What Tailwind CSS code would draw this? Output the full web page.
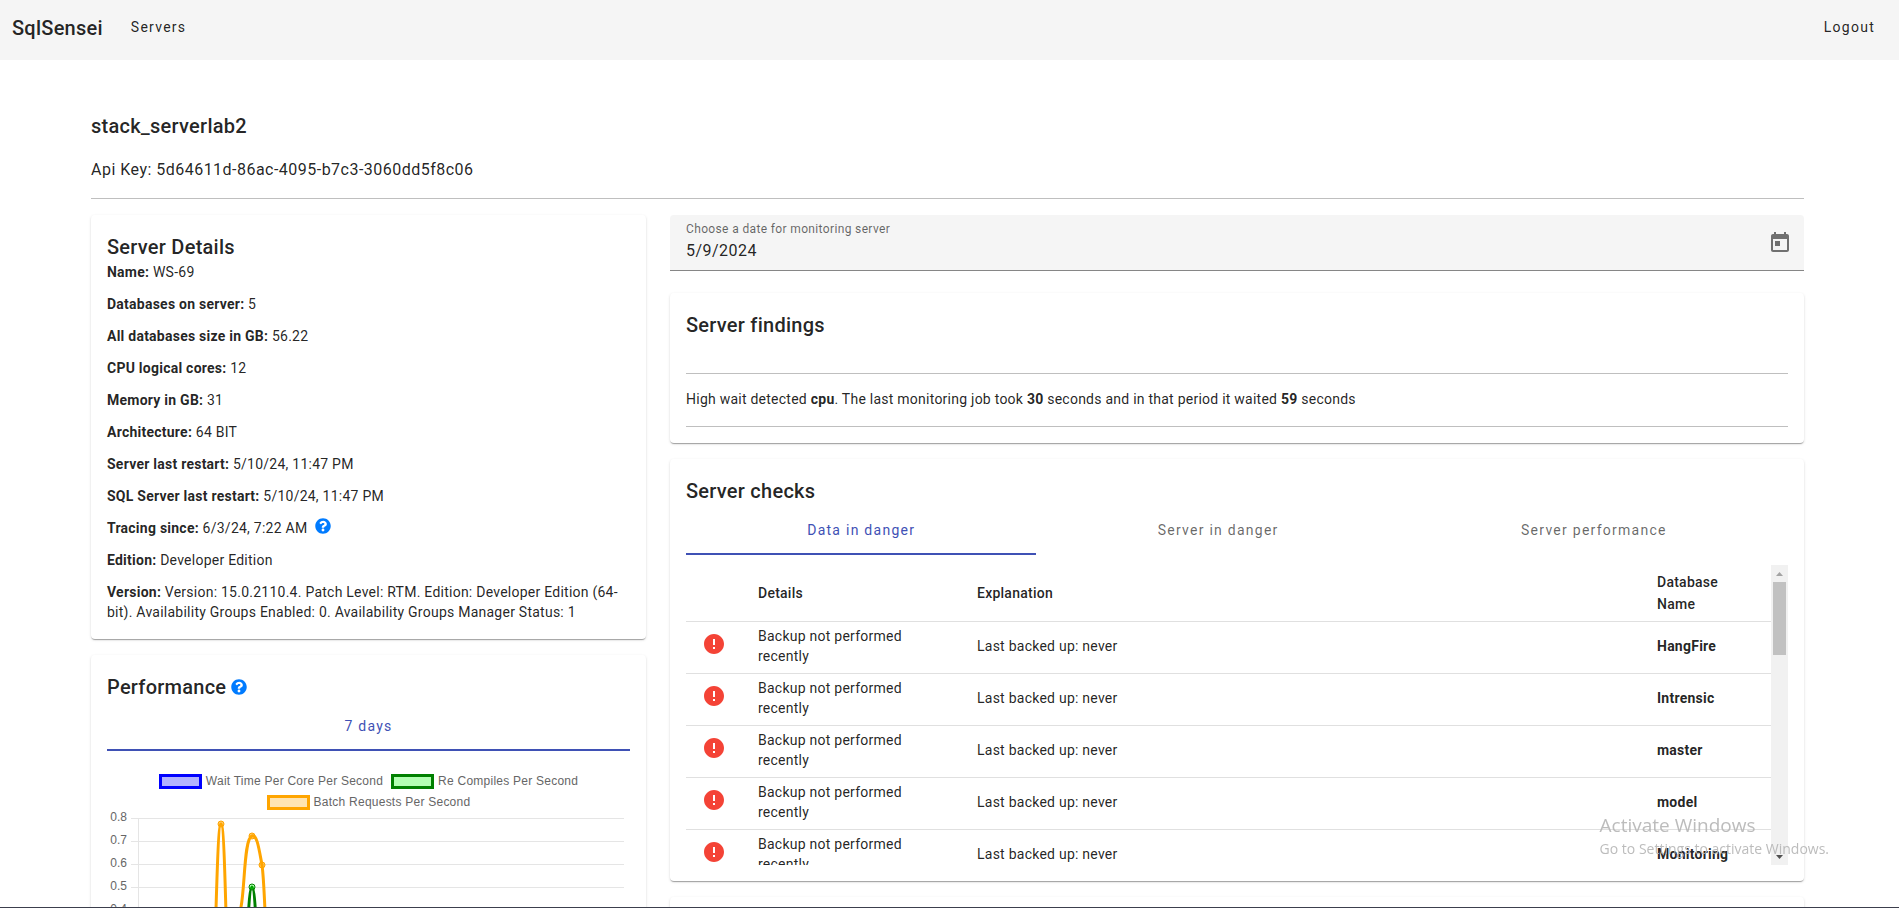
<!DOCTYPE html>
<html lang="en">
<head>
    <meta charset="UTF-8">
    <meta name="viewport" content="width=device-width, initial-scale=1.0">
    <title>SqlSensei</title>
    <script src="https://cdn.jsdelivr.net/npm/@tailwindcss/browser@4"></script>
    <style>
        body {
            font-family: Roboto, "Liberation Sans", sans-serif;
        }
        .card {
            box-shadow: 0 2px 1px -1px rgba(0,0,0,.2), 0 1px 1px 0 rgba(0,0,0,.14), 0 1px 3px 0 rgba(0,0,0,.12);
        }
    </style>
</head>
<body class="h-screen overflow-hidden bg-white text-sm text-black/87">

    <!-- Icons -->
    <svg class="hidden">
        <symbol id="icon-help" viewBox="0 0 512 512">
            <path fill="currentColor" d="M504 256c0 136.997-111.043 248-248 248S8 392.997 8 256C8 119.083 119.043 8 256 8s248 111.083 248 248zM262.655 90c-54.497 0-89.255 22.957-116.549 63.758-3.536 5.286-2.353 12.415 2.715 16.258l34.699 26.31c5.205 3.947 12.621 3.008 16.665-2.122 17.864-22.658 30.113-35.797 57.303-35.797 20.429 0 45.698 13.148 45.698 32.958 0 14.976-12.363 22.667-32.534 33.976C247.128 238.528 216 254.941 216 296v4c0 6.627 5.373 12 12 12h56c6.627 0 12-5.373 12-12v-1.333c0-28.462 83.186-29.647 83.186-106.667 0-58.002-60.165-102-116.531-102zM256 338c-25.365 0-46 20.635-46 46 0 25.364 20.635 46 46 46s46-20.636 46-46c0-25.365-20.635-46-46-46z"/>
        </symbol>
        <symbol id="icon-error" viewBox="0 0 24 24">
            <path fill="currentColor" d="M12 2C6.48 2 2 6.48 2 12s4.48 10 10 10 10-4.48 10-10S17.52 2 12 2zm1 15h-2v-2h2v2zm0-4h-2V7h2v6z"/>
        </symbol>
    </svg>

    <header class="flex h-[60px] justify-between bg-[#f5f5f5] pl-3 pr-6">
        <nav class="flex gap-7">
            <a href="#" class="pt-3 text-xl leading-8 font-medium tracking-[0.0125em]">SqlSensei</a>
            <a href="#" class="pt-3 leading-[30px] tracking-[0.09em]">Servers</a>
        </nav>
        <a href="#" class="pt-3 leading-[30px] tracking-[0.09em]">Logout</a>
    </header>

    <main class="pt-[50px] pr-[95px] pl-[91px]">
        <h1 class="text-xl leading-8 font-medium tracking-[0.0125em]">stack_serverlab2</h1>
        <p class="mt-4 text-base leading-6 tracking-[0.03em]">Api Key: 5d64611d-86ac-4095-b7c3-3060dd5f8c06</p>
        <hr class="mt-4 mb-4 border-black/25">

        <div class="grid grid-cols-[555fr_1134fr] items-start gap-6">

            <!-- Left column -->
            <div class="flex flex-col gap-4">
                <section class="card rounded p-4">
                    <h2 class="text-xl leading-8 font-medium tracking-[0.0125em]">Server Details</h2>
                    <div class="-mt-px flex flex-col gap-3 pb-px leading-5 tracking-[0.0175em]">
                        <p><b>Name:</b> WS-69</p>
                        <p><b>Databases on server:</b> 5</p>
                        <p><b>All databases size in GB:</b> 56.22</p>
                        <p><b>CPU logical cores:</b> 12</p>
                        <p><b>Memory in GB:</b> 31</p>
                        <p><b>Architecture:</b> 64 BIT</p>
                        <p><b>Server last restart:</b> 5/10/24, 11:47 PM</p>
                        <p><b>SQL Server last restart:</b> 5/10/24, 11:47 PM</p>
                        <p class="flex gap-2">
                            <span><b>Tracing since:</b> 6/3/24, 7:22 AM</span>
                            <svg class="size-4 text-[#007bff]"><use href="#icon-help"/></svg>
                        </p>
                        <p><b>Edition:</b> Developer Edition</p>
                        <p><b>Version:</b> Version: 15.0.2110.4. Patch Level: RTM. Edition: Developer Edition (64-bit). Availability Groups Enabled: 0. Availability Groups Manager Status: 1</p>
                    </div>
                </section>

                <section class="card rounded p-4">
                    <h2 class="flex items-center gap-[5px] text-xl leading-8 font-medium tracking-[0.0125em]">
                        Performance
                        <svg class="size-4 text-[#007bff]"><use href="#icon-help"/></svg>
                    </h2>
                    <div role="tablist" class="flex">
                        <button role="tab" aria-selected="true" class="h-12 flex-auto border-b-2 border-[#3f51b5] px-6 tracking-[0.09em] text-[#3f51b5]">7 days</button>
                    </div>

                    <!-- Chart legend -->
                    <ul class="mt-[22px] flex flex-wrap justify-center gap-x-2 gap-y-[5px] px-8 pb-px font-['Liberation_Sans',sans-serif] text-xs tracking-[0.02em] text-[#666]">
                        <li class="flex items-center gap-1"><span class="h-[15px] w-[43px] border-3 border-[#0000ff] bg-[#0000ff]/30"></span>Wait Time Per Core Per Second</li>
                        <li class="flex items-center gap-1"><span class="h-[15px] w-[43px] border-3 border-[#008000] bg-[#00ff00]/30"></span>Re Compiles Per Second</li>
                        <li class="flex items-center gap-1"><span class="h-[15px] w-[43px] border-3 border-[#ffa500] bg-[#ffa500]/30"></span>Batch Requests Per Second</li>
                    </ul>

                    <svg viewBox="0 0 523 206" class="w-full" font-family="Liberation Sans, sans-serif" font-size="12" fill="#666">
                        <g stroke="#e5e5e5" stroke-width="1">
                            <path d="M24 7.500H517M24 30.500H517M24 53.500H517M24 76.500H517M24 99.500H517M24 122.500H517M24 145.500H517M24 168.500H517M24 191.500H517M31.500 7V199"/>
                        </g>
                        <g text-anchor="end">
                            <text x="20" y="10">0.8</text>
                            <text x="20" y="33">0.7</text>
                            <text x="20" y="56">0.6</text>
                            <text x="20" y="79">0.5</text>
                            <text x="20" y="102">0.4</text>
                            <text x="20" y="125">0.3</text>
                            <text x="20" y="148">0.2</text>
                            <text x="20" y="171">0.1</text>
                            <text x="20" y="194">0</text>
                        </g>
                        <!-- Batch requests -->
                        <path d="M31 191H103C109 191 109 13 114 13C119 13 119 191 124 191C130 191 130 120 134 96C138 76 137 27 145 25C150 23 152 38 155 54C159 80 159 191 166 191H517" fill="none" stroke="#ffa500" stroke-width="3"/>
                        <g fill="#ffa500" fill-opacity=".6" stroke="#ffa500">
                            <circle cx="114" cy="13" r="3"/>
                            <circle cx="145" cy="25" r="3"/>
                            <circle cx="155" cy="54" r="3"/>
                        </g>
                        <!-- Re compiles -->
                        <path d="M31 191H132C140 191 140 76 145 76C150 76 150 191 157 191H517" fill="none" stroke="#008000" stroke-width="3"/>
                        <circle cx="145" cy="76" r="3" fill="#00ff00" fill-opacity=".3" stroke="#008000"/>
                    </svg>
                </section>
            </div>

            <!-- Right column -->
            <div class="flex flex-col gap-4">
                <div class="mb-[6px] flex h-14 items-center justify-between rounded-t border-b border-black/45 bg-[#f5f5f5] pl-4">
                    <div class="flex flex-1 flex-col">
                        <label for="monitor-date" class="text-xs leading-[15px] tracking-[0.03em] text-black/60">Choose a date for monitoring server</label>
                        <input id="monitor-date" type="text" value="5/9/2024" class="h-[26px] w-full bg-transparent text-base tracking-[0.03em] outline-none">
                    </div>
                    <button aria-label="Open calendar" class="flex size-12 items-center justify-center text-black/54">
                        <svg class="size-6" viewBox="0 0 24 24"><path fill="currentColor" d="M19 3h-1V1h-2v2H8V1H6v2H5c-1.110 0-1.990.9-1.990 2L3 19c0 1.100.89 2 2 2h14c1.100 0 2-.9 2-2V5c0-1.100-.9-2-2-2zm0 16H5V8h14v11zM7 10h5v5H7z"/></svg>
                    </button>
                </div>

                <section class="card rounded p-4">
                    <h2 class="text-xl leading-8 font-medium tracking-[0.0125em]">Server findings</h2>
                    <hr class="mt-8 border-black/25">
                    <p class="pt-[15px] pb-[17px] leading-5 tracking-[0.0175em]">High wait detected <b>cpu</b>. The last monitoring job took <b>30</b> seconds and in that period it waited <b>59</b> seconds</p>
                    <hr class="border-black/25">
                </section>

                <section class="card rounded p-4">
                    <h2 class="text-xl leading-8 font-medium tracking-[0.0125em]">Server checks</h2>
                    <div role="tablist" class="flex">
                        <button role="tab" aria-selected="true" class="h-12 flex-auto border-b-2 border-[#3f51b5] px-6 tracking-[0.09em] text-[#3f51b5]">Data in danger</button>
                        <button role="tab" class="h-12 flex-auto border-b-2 border-transparent px-6 tracking-[0.09em] text-black/60">Server in danger</button>
                        <button role="tab" class="h-12 flex-auto border-b-2 border-transparent px-6 tracking-[0.09em] text-black/60">Server performance</button>
                    </div>

                    <div class="mt-[10px] flex h-[300px]">
                        <div class="flex-1 overflow-hidden">
                            <table class="w-full table-fixed text-left leading-5 tracking-[0.0175em]">
                                <thead>
                                    <tr class="h-14 border-b border-black/12 leading-[22px]">
                                        <th class="w-14"></th>
                                        <th class="w-[219px] px-4 font-medium">Details</th>
                                        <th class="px-4 font-medium">Explanation</th>
                                        <th class="w-[130px] px-4 font-medium">Database Name</th>
                                    </tr>
                                </thead>
                                <tbody id="checks"></tbody>
                            </table>
                        </div>
                        <!-- Scrollbar -->
                        <div class="flex w-[17px] flex-col items-center justify-between bg-[#f1f1f1]">
                            <div class="flex flex-col items-center">
                                <svg class="h-[17px] w-[17px]" viewBox="0 0 17 17"><path fill="#a3a3a3" d="M5 11h7L8.500 7z"/></svg>
                                <div class="h-[73px] w-[13px] bg-[#c1c1c1]"></div>
                            </div>
                            <svg class="h-[17px] w-[17px]" viewBox="0 0 17 17"><path fill="#505050" d="M5 7h7l-3.500 4z"/></svg>
                        </div>
                    </div>
                </section>

                <section class="card h-40 rounded p-4"></section>
            </div>
        </div>
    </main>

    <!-- System watermark -->
    <div class="pointer-events-none fixed right-[70px] bottom-[47px] font-['Open_Sans',sans-serif] leading-6 text-[#b5b5b5]/90">
        <p class="text-[19px] leading-6">Activate Windows</p>
        <p class="text-[14px] leading-6">Go to Settings to activate Windows.</p>
    </div>

    <div class="fixed inset-x-0 bottom-0 h-px bg-[#3c3f4d]"></div>

    <script>
        const databases = ['HangFire', 'Intrensic', 'master', 'model', 'Monitoring'];

        // One row per failed check
        document.getElementById('checks').innerHTML = databases.map(name => `
            <tr class="h-[52px] border-b border-black/12">
                <td class="pb-1.5 pl-4"><svg class="size-6 text-[#f44336]"><use href="#icon-error"/></svg></td>
                <td class="px-4 pb-0.5">Backup not performed recently</td>
                <td class="px-4 pb-0.5">Last backed up: never</td>
                <td class="px-4 pb-0.5 font-bold">${name}</td>
            </tr>`).join('');
    </script>
</body>
</html>
